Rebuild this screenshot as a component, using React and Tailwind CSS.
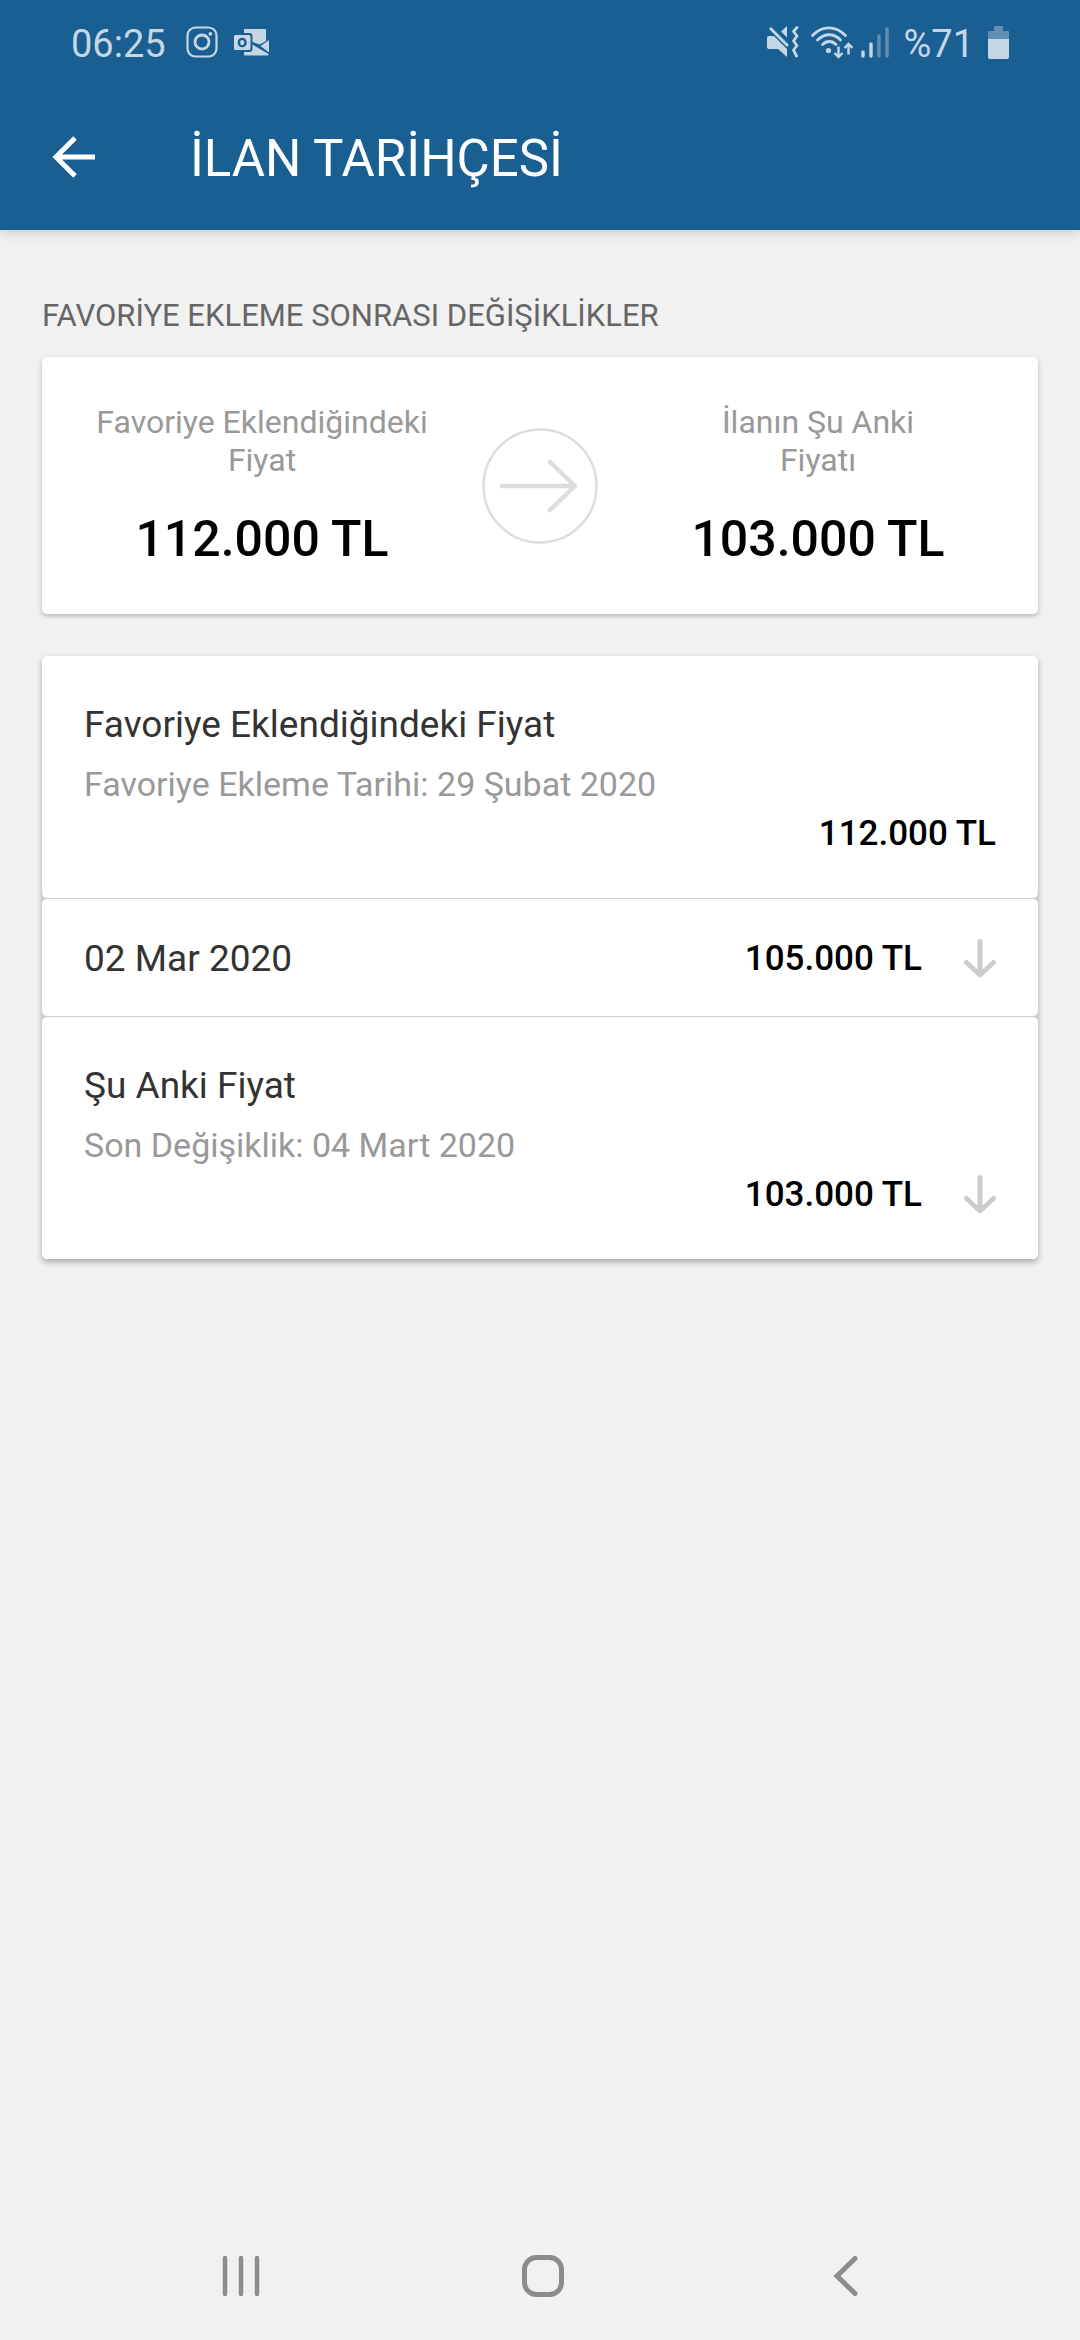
import React from "react";

const SUMMARY = [
  { label: ["Favoriye Eklendiğindeki", "Fiyat"], price: "112.000 TL" },
  { label: ["İlanın Şu Anki", "Fiyatı"], price: "103.000 TL" },
];

const HISTORY = [
  {
    title: "Favoriye Eklendiğindeki Fiyat",
    note: "Favoriye Ekleme Tarihi: 29 Şubat 2020",
    price: "112.000 TL",
    dropped: false,
  },
  { title: "02 Mar 2020", price: "105.000 TL", dropped: true },
  {
    title: "Şu Anki Fiyat",
    note: "Son Değişiklik: 04 Mart 2020",
    price: "103.000 TL",
    dropped: true,
  },
];

function InstagramIcon() {
  return (
    <svg className="h-8 w-8" viewBox="0 0 32 32" fill="none" stroke="currentColor" aria-hidden="true">
      <rect x="1.5" y="1.5" width="29" height="29" rx="8" strokeWidth="2.2" />
      <circle cx="16" cy="16" r="7" strokeWidth="2.8" />
      <circle cx="24.4" cy="7.8" r="1.9" fill="currentColor" stroke="none" />
    </svg>
  );
}

function OutlookIcon() {
  return (
    <svg className="h-[27px] w-9" viewBox="0 0 36 27" fill="currentColor" aria-hidden="true">
      <path
        fillRule="evenodd"
        d="M1.5 6H15a1.5 1.5 0 0 1 1.5 1.5v12A1.5 1.5 0 0 1 15 21H1.5A1.5 1.5 0 0 1 0 19.5v-12A1.5 1.5 0 0 1 1.5 6Zm6.7 2.7c-2.7 0-4.5 2-4.5 4.8s1.8 4.8 4.5 4.8 4.5-2 4.5-4.8-1.8-4.8-4.5-4.8Zm0 2.2c1.3 0 2.1 1 2.1 2.6s-.8 2.6-2.1 2.6-2.1-1-2.1-2.6.8-2.6 2.1-2.6Z"
      />
      <path d="M11 0h20a1 1 0 0 1 1 1v11l-6.5 3.5L18.500 13V7a3 3 0 0 0-3-3H10V1a1 1 0 0 1 1-1Z" />
      <path d="M35 11v12.5l-8.5-6.5Z" />
      <path d="M18.5 15.5 34.5 25v.5a1 1 0 0 1-1 1H11a1 1 0 0 1-1-1V23h5.5a3 3 0 0 0 3-3Z" />
    </svg>
  );
}

function MuteVibrateIcon() {
  return (
    <svg className="h-8 w-8" viewBox="0 0 32 32" aria-hidden="true">
      <path d="M2 10h5l13 13v8l-9-8H2a2 2 0 0 1-2-2v-9a2 2 0 0 1 2-2Z" fill="currentColor" />
      <path d="M14 5.5 20 0v11.5Z" fill="currentColor" />
      <path d="M3 2 21 20" stroke="currentColor" strokeWidth="2.8" />
      <path d="M30 1.5 26.5 5.500 30 10l-3.5 5 3.5 4.5-3.5 4.5 3 6" fill="none" stroke="currentColor" strokeWidth="2.8" strokeLinecap="round" strokeLinejoin="round" />
    </svg>
  );
}

function WifiIcon() {
  return (
    <svg className="h-[33px] w-[42px]" viewBox="0 0 42 33" fill="none" stroke="currentColor" strokeWidth="2.8" aria-hidden="true">
      <path d="M1.5 9.5C11-.8 24.5-.8 34.500 9.5" strokeLinecap="round" />
      <path d="M6.5 14c7-7 16.5-7 23 0" strokeLinecap="round" />
      <path d="M11.5 18.5c4-4 9.5-4 13.5 0" strokeLinecap="round" />
      <circle cx="17.5" cy="24.5" r="2.6" fill="currentColor" stroke="none" />
      <path d="M27.5 20.5v10M23.5 27l4 4 4-4M37.5 28.5v-10M33.5 22l4-4 4 4" strokeWidth="2.4" />
    </svg>
  );
}

function SignalIcon() {
  return (
    <svg className="h-[31px] w-7" viewBox="0 0 28 31" stroke="currentColor" strokeWidth="3.4" strokeLinecap="round" aria-hidden="true">
      <path d="M2 25v4M10 17v12" />
      <path d="M18 9v20M26 2v27" opacity="0.4" />
    </svg>
  );
}

function BatteryIcon() {
  return (
    <svg className="h-[33px] w-[21px]" viewBox="0 0 21 33" fill="currentColor" aria-hidden="true">
      <path d="M6 1a1 1 0 0 1 1-1h7a1 1 0 0 1 1 1v4h5a1 1 0 0 1 1 1v7H0V6a1 1 0 0 1 1-1h5Z" opacity="0.4" />
      <path d="M0 13h21v18a2 2 0 0 1-2 2H2a2 2 0 0 1-2-2Z" />
    </svg>
  );
}

function StatusBar() {
  return (
    <div className="flex h-[84px] items-center justify-between px-[71px] text-[#c5d7e6]">
      <div className="flex items-center">
        <span className="pt-1 text-[38px] leading-[44px]">06:25</span>
        <span className="ml-5">
          <InstagramIcon />
        </span>
        <span className="ml-4">
          <OutlookIcon />
        </span>
      </div>
      <div className="flex items-center">
        <MuteVibrateIcon />
        <span className="ml-3">
          <WifiIcon />
        </span>
        <span className="ml-2">
          <SignalIcon />
        </span>
        <span className="ml-3.5 pt-1 text-[38px] leading-[44px]">%71</span>
        <span className="ml-3.5">
          <BatteryIcon />
        </span>
      </div>
    </div>
  );
}

function DownArrow() {
  return (
    <svg className="ml-[42px] h-10 w-8 text-[#cccccc]" viewBox="0 0 32 40" fill="none" stroke="currentColor" strokeWidth="5" strokeLinecap="round" strokeLinejoin="round" aria-hidden="true">
      <path d="M16 2.500v33M2.500 23.500l13.500 12.500 13.500-12.500" />
    </svg>
  );
}

function SummaryPrice({ label, price }) {
  return (
    <div className="flex-1 text-center">
      <p className="text-[32px] leading-[38px] text-[#999999]">
        {label[0]}
        <br />
        {label[1]}
      </p>
      <p className="mt-[30px] text-[50px] leading-[60px] font-medium text-black">{price}</p>
    </div>
  );
}

function HistoryItem({ title, note, price, dropped }) {
  const priceLine = (
    <div className="flex items-center justify-end">
      <span className="text-[35px] leading-[42px] font-medium text-black">{price}</span>
      {dropped && <DownArrow />}
    </div>
  );

  if (!note) {
    return (
      <li className="flex items-center justify-between rounded-[5px] bg-white px-[42px] pt-[39px] pb-9">
        <span className="text-[37px] leading-[42px] text-[#333333]">{title}</span>
        {priceLine}
      </li>
    );
  }

  return (
    <li className="rounded-[5px] bg-white px-[42px] pt-12 pb-[43px]">
      <h3 className="text-[37px] leading-[42px] text-[#333333]">{title}</h3>
      <p className="mt-[18px] mb-[9px] text-[34px] leading-[40px] text-[#999999]">{note}</p>
      {priceLine}
    </li>
  );
}

export default function App() {
  return (
    <div className="flex min-h-screen flex-col bg-[#f1f1f1] font-[Roboto,sans-serif]">
      <header className="bg-[#195f92] shadow-[0_2px_12px_rgba(0,0,0,0.18)]">
        <StatusBar />
        <div className="flex h-[146px] items-center pl-[52px]">
          <button type="button" aria-label="Geri" className="text-white">
            <svg className="h-[44px] w-[44px]" viewBox="0 0 44 44" fill="none" stroke="currentColor" strokeWidth="5">
              <path d="M43 22H5M23 3 4 22l19 19" />
            </svg>
          </button>
          <h1 className="ml-[94px] pt-1 text-[51px] leading-[60px] text-white">İLAN TARİHÇESİ</h1>
        </div>
      </header>

      <main className="px-[42px] pt-[67px]">
        <h2 className="text-[31px] leading-[38px] text-[#666666]">FAVORİYE EKLEME SONRASI DEĞİŞİKLİKLER</h2>

        <section className="mt-[22px] flex items-center rounded-[5px] bg-white pt-[46px] pb-[45px] shadow-[0_2px_5px_rgba(0,0,0,0.25)]">
          <SummaryPrice label={SUMMARY[0].label} price={SUMMARY[0].price} />
          <svg className="h-[116px] w-[116px] text-[#dddddd]" viewBox="0 0 116 116" fill="none" stroke="currentColor" aria-hidden="true">
            <circle cx="58" cy="58" r="56.5" strokeWidth="2.5" />
            <path d="M20 58h73M68 34l25 24-25 24" strokeWidth="4.500" strokeLinecap="round" strokeLinejoin="round" />
          </svg>
          <SummaryPrice label={SUMMARY[1].label} price={SUMMARY[1].price} />
        </section>

        <ul className="mt-[42px] flex flex-col gap-px rounded-[5px] bg-[#cccccc] shadow-[0_3px_6px_rgba(0,0,0,0.3)]">
          {HISTORY.map((item) => (
            <HistoryItem key={item.title} {...item} />
          ))}
        </ul>
      </main>

      <nav className="mt-auto flex h-32 items-center justify-center pl-[6px] text-[#8c8c8c]">
        <button type="button" aria-label="Son uygulamalar" className="flex w-[302px] justify-center">
          <svg className="h-[42px] w-[42px]" viewBox="0 0 42 42" stroke="currentColor" strokeWidth="4.5" strokeLinecap="round">
            <path d="M5 3v36M21 3v36M37 3v36" />
          </svg>
        </button>
        <button type="button" aria-label="Ana ekran" className="flex w-[302px] justify-center">
          <svg className="h-[42px] w-[42px]" viewBox="0 0 42 42" fill="none" stroke="currentColor" strokeWidth="5">
            <rect x="2.5" y="2.5" width="37" height="37" rx="12" />
          </svg>
        </button>
        <button type="button" aria-label="Geri git" className="flex w-[302px] justify-center">
          <svg className="h-[42px] w-[42px]" viewBox="0 0 42 42" fill="none" stroke="currentColor" strokeWidth="5" strokeLinecap="round">
            <path d="M31 3.500 13 21l18 17.500" />
          </svg>
        </button>
      </nav>
    </div>
  );
}
